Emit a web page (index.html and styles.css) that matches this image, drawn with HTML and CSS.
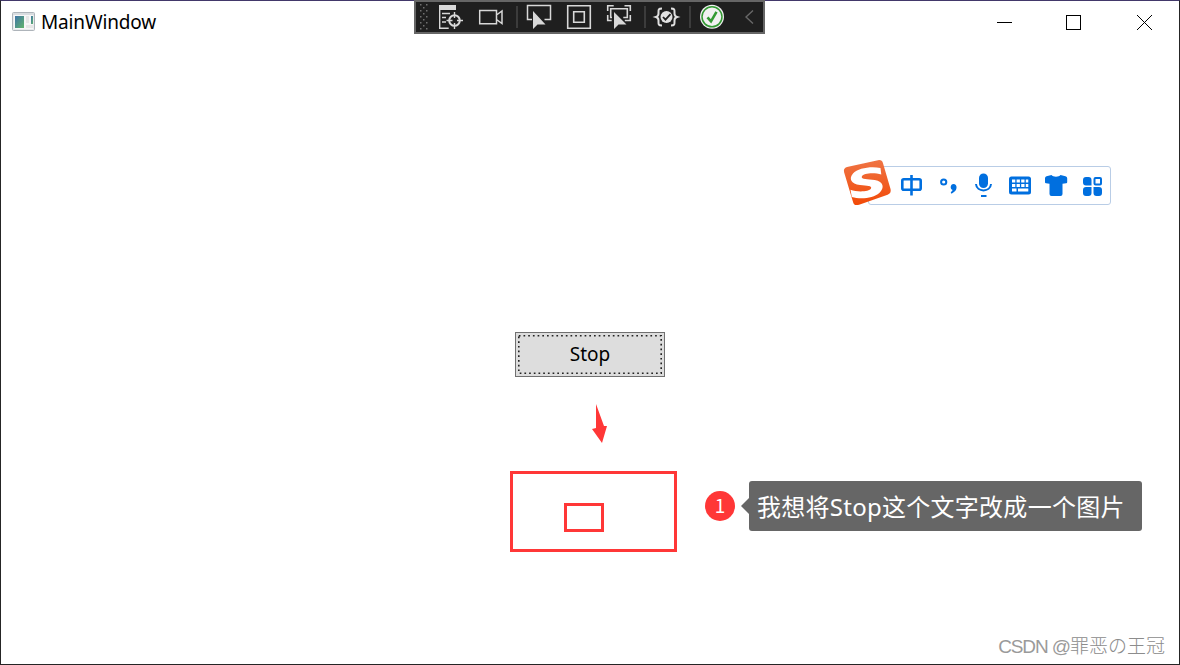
FILE: index.html
```
<!DOCTYPE html>
<html lang="zh-CN">
<head>
<meta charset="utf-8">
<title>MainWindow</title>
<link rel="stylesheet" href="styles.css">
</head>
<body>
<div class="window">
  <header class="titlebar">
    <svg class="app-icon" width="24" height="20" viewBox="12 12 24 20">
      <defs><linearGradient id="pane" x1="0" y1="0" x2="1" y2="1"><stop offset="0" stop-color="#3f74a8"/><stop offset="1" stop-color="#62b56b"/></linearGradient></defs>
      <rect x="12.500" y="12.500" width="22" height="18" rx="1" fill="#e9ebed" stroke="#aeb4ba"/>
      <path d="M13 14h21" stroke="#c9ced3"/>
      <rect x="14" y="15" width="19" height="14" fill="#f7f7f7"/>
      <rect x="15" y="16" width="9" height="12" fill="url(#pane)"/>
      <path d="M26 16h3v7h-3zM26 25h7v3h-7z" fill="#e6e6e6"/>
      <rect x="31" y="16" width="2" height="8" fill="url(#pane)"/>
    </svg>
    <h1 class="title">MainWindow</h1>
    <div class="captions">
      <svg width="70" height="43" viewBox="970 1 70 43"><path d="M997 22.500h15" stroke="#000"/></svg>
      <svg width="70" height="43" viewBox="1040 1 70 43"><rect x="1066.500" y="15.500" width="14" height="14" fill="none" stroke="#000"/></svg>
      <svg width="69" height="43" viewBox="1110 1 69 43"><path d="M1137 15l15 15M1152 15l-15 15" stroke="#000"/></svg>
    </div>
  </header>
  <main class="client">
    <button class="stop">
      <svg class="focus" width="146" height="41" viewBox="0 0 146 41"><rect x="1.800" y="1.800" width="142.400" height="37.400" fill="none" stroke="#222" stroke-width="1.600" stroke-dasharray="1.700 3"/></svg>
      <span class="label">Stop</span>
    </button>
  </main>
</div>

<div class="debugbar">
  <svg width="18" height="30" viewBox="416 2 18 30"><defs><pattern id="grip" x="420" y="4" width="6" height="6" patternUnits="userSpaceOnUse"><path d="M0 0h1.500v1.500h-1.500zM3 3h1.500v1.500h-1.500z" fill="#707070"/></pattern></defs><rect x="420" y="4" width="8" height="26" fill="url(#grip)"/></svg>
  <svg width="36" height="30" viewBox="434 2 36 30" fill="none" stroke="#d8d8d8" stroke-width="1.400">
    <path d="M439 5h17v5h-17z" fill="#d8d8d8" stroke="none"/><path d="M439.700 9v19.300h9M442 13.500h8M442 17.500h4M442 22h4M446.500 20.500h6M457 20.500h6M454.500 12v6M454.500 23v6"/><circle cx="454.500" cy="20.500" r="5.300" stroke-width="2"/>
  </svg>
  <svg width="46" height="30" viewBox="470 2 46 30" fill="none" stroke="#d8d8d8" stroke-width="1.500"><path d="M479.700 10.500h16.800v13.300h-16.800zM496.500 15l5.500-4v12.500l-5.500-4"/></svg>
  <i class="sep"></i>
  <svg width="42" height="30" viewBox="518 2 42 30"><path d="M532 19.500h-4.500v-14h23v14h-6" fill="none" stroke="#d8d8d8" stroke-width="1.500"/><path d="M533 11v18l4.500-4.500h8z" fill="#d8d8d8"/></svg>
  <svg width="40" height="30" viewBox="560 2 40 30" fill="none" stroke="#d8d8d8" stroke-width="1.600"><path d="M567.700 5.700h22.600v22.600h-22.600zM573.700 11.700h10.600v10.600h-10.600z"/></svg>
  <svg width="44" height="30" viewBox="600 2 44 30"><path d="M607.700 11v-5.300h6M624.500 5.700h5.800v5.300M607.700 15v5.500h4M630.300 15v5.500h-5.500M612 17.500h-1.300v-8.800h16.600v8.800h-4" fill="none" stroke="#d8d8d8" stroke-width="1.600"/><path d="M614 12v17l4.500-4.500h8z" fill="#d8d8d8"/></svg>
  <i class="sep"></i>
  <svg width="43" height="30" viewBox="646 2 43 30" fill="none" stroke="#e0e0e0" stroke-width="2"><path d="M662 8.500c-4 0-3.500 1-3.500 5 0 2-.8 3-2.500 3.500 1.700.5 2.500 1.500 2.500 3.500 0 4-.5 5 3.500 5M671 8.500c4 0 3.500 1 3.500 5 0 2 .8 3 2.500 3.500-1.700.5-2.500 1.500-2.500 3.500 0 4 .5 5-3.500 5"/><circle cx="666.500" cy="17" r="6" fill="#e0e0e0" stroke="none"/><path d="M663 17l2.500 2.700 5-5.500" stroke="#1f1f1f" stroke-width="1.800"/></svg>
  <i class="sep"></i>
  <svg width="45" height="30" viewBox="691 2 45 30" fill="none"><circle cx="712" cy="16.800" r="12" fill="#f1f1f1"/><circle cx="712" cy="16.800" r="10" stroke="#339933" stroke-width="1.500"/><path d="M707.500 17.300l3.500 4 5.500-9.500" stroke="#339933" stroke-width="2.600"/></svg>
  <svg width="27" height="30" viewBox="736 2 27 30"><path d="M753 10.500l-7 6.500 7 6.500" fill="none" stroke="#686868" stroke-width="1.400"/></svg>
</div>

<div class="ime">
  <svg class="ime-logo" width="50" height="50" viewBox="842 158 50 50">
    <defs><linearGradient id="orange" x1="0" y1="0" x2="0" y2="1"><stop offset="0" stop-color="#ef7444"/><stop offset="1" stop-color="#f24a08"/></linearGradient></defs>
    <path d="M847 167l31-6.800q4-.7 5 3l7.600 26q.8 4-3 5.500l-28.500 10q-5 1.500-6-2.500l-9-30q-1-4 2.900-5.200z" fill="url(#orange)"/>
    <path d="M880.500 168l.8 6.500c-7-2-18-1.500-19.500 2-1 3 6 2.500 13 3.500 9 1.500 10 8 4.500 13-6 5.500-19 6.500-27.500 4l-1.300-7.200c7 2.500 18.500 2 20.500-1.300 1.500-2.800-4-2.700-11-3.500-9-1-11.500-6.500-7-11.500 5-5.500 18-7.500 27.500-5.500z" fill="#fff"/>
  </svg>
  <svg width="38" height="36" viewBox="892 168 38 36" fill="none" stroke="#006fdf" stroke-width="2.600"><rect x="902.300" y="179.300" width="18.400" height="10.400" rx="1.500"/><path d="M911.500 175v20.500"/></svg>
  <svg width="36" height="36" viewBox="930 168 36 36"><circle cx="943.700" cy="182" r="2.600" fill="none" stroke="#006fdf" stroke-width="2"/><path d="M953.500 184c4 0 4 6 .5 8l-2.500 1.700-.8-1.200 2-2.500c-3-1-2.500-6 .8-6z" fill="#006fdf"/></svg>
  <svg width="36" height="36" viewBox="966 168 36 36" fill="none" stroke="#006fdf" stroke-width="2"><rect x="979" y="173.500" width="9" height="14.500" rx="4.500" fill="#006fdf" stroke="none"/><path d="M976 184c.5 8.500 14.500 8.500 15 0M981 196h5.500"/></svg>
  <svg width="36" height="36" viewBox="1002 168 36 36"><rect x="1009" y="176.500" width="22" height="18" rx="2.500" fill="#006fdf"/><path d="M1012 179.500h3.300v3h-3.300zM1016.600 179.500h3.300v3h-3.300zM1021.200 179.500h3.300v3h-3.300zM1025.800 179.500h2.500v3h-2.500zM1012 184h3.300v3h-3.300zM1016.600 184h3.300v3h-3.300zM1021.200 184h3.300v3h-3.300zM1025.800 184h2.500v3h-2.500zM1012 188.500h4.500v3h-4.500zM1018 188.500h10.300v3h-10.300z" fill="#fff"/></svg>
  <svg width="36" height="36" viewBox="1038 168 36 36"><path d="M1051.500 175c1.500 2.200 7.500 2.200 9 0l5 1.200q1.700.5 1.700 2v4q0 1-1 1l-3.700.5v10.300q0 2-2 2h-9q-2 0-2-2v-10.300l-3.500-.5q-1 0-1-1v-4q0-1.500 1.500-2z" fill="#006fdf"/></svg>
  <svg width="36" height="36" viewBox="1074 168 36 36" fill="#006fdf"><path d="M1086 177h2.500q3 0 3 3v5.500h-5.500q-3 0-3-3v-2.500q0-3 3-3zM1083 190q0-3 3-3h5.500v6q0 3-3 3h-2.500q-3 0-3-3zM1093.500 187h5.500q3 0 3 3v3q0 3-3 3h-2.500q-3 0-3-3z"/><rect x="1094.500" y="178" width="6.500" height="6.500" rx="1" fill="none" stroke="#006fdf" stroke-width="2"/></svg>
</div>

<svg class="arrow" width="16" height="40" viewBox="592 404 16 40"><path d="M596 404l8 22h3l-5 17-10-14 4-1z" fill="#ff3737"/></svg>
<div class="mark"></div>
<div class="mark-inner"></div>
<div class="note">
  <span class="badge">1</span>
  <i class="pointer"></i>
  <p class="bubble">我想将Stop这个文字改成一个图片</p>
</div>
<div class="watermark"><span class="latin">CSDN @</span>罪恶の王冠</div>
</body>
</html>
```
FILE: styles.css
```
* { box-sizing: border-box; }
body {
  margin: 0;
  width: 1180px;
  height: 665px;
  overflow: hidden;
  background: #fff;
  font-family: "Noto Sans", "Noto Sans CJK SC", sans-serif;
  position: relative;
}
svg { display: block; flex: none; }
.window {
  height: 665px;
  display: flex;
  flex-direction: column;
  border: 1px solid #252525;
  border-top-color: #42386a;
}
.titlebar { display: flex; height: 43px; }
.app-icon { margin: 11px 0 0 11px; }
.title {
  margin: 7px 0 0 5px;
  font-size: 19px;
  line-height: 28px;
  font-weight: 400;
  letter-spacing: -0.15px;
  color: #000;
}
.captions { display: flex; margin-left: auto; }
.client { flex: 1; display: flex; align-items: center; justify-content: center; }
.stop {
  display: grid;
  width: 150px;
  height: 45px;
  padding: 1px;
  border: 1px solid #707070;
  background: #ddd;
  font: 19px/41px "Noto Sans", sans-serif;
  color: #000;
}
.focus, .label { grid-area: 1 / 1; }

.debugbar {
  position: absolute;
  left: 414px;
  top: 0;
  width: 351px;
  height: 34px;
  display: flex;
  align-items: center;
  border: 2px solid #666;
  background: #1f1f1f;
}
.sep { width: 2px; height: 22px; background: #3c3c3c; }

.ime {
  position: absolute;
  left: 868px;
  top: 166px;
  width: 243px;
  height: 39px;
  padding-left: 23px;
  display: flex;
  align-items: center;
  border: 1.500px solid #b9cde6;
  border-radius: 3px;
  background: #fff;
}
.ime-logo { position: absolute; left: -27px; top: -9px; }

.arrow { position: absolute; left: 592px; top: 404px; }
.mark, .mark-inner { position: absolute; border: 3px solid #ff3737; }
.mark { left: 510px; top: 471px; width: 167px; height: 81px; }
.mark-inner { left: 564px; top: 503px; width: 40px; height: 29px; }
.note {
  position: absolute;
  left: 705px;
  top: 481px;
  display: flex;
  align-items: center;
}
.badge {
  width: 30px;
  height: 30px;
  border-radius: 50%;
  background: #ff3737;
  color: #fff;
  font: 19px/28px "Noto Sans CJK SC", sans-serif;
  text-align: center;
}
.pointer {
  margin-left: 6px;
  border: 8px solid transparent;
  border-left: 0;
  border-right-color: #666;
}
.bubble {
  margin: 0;
  width: 393px;
  height: 50px;
  padding-left: 8px;
  border-radius: 3px;
  background: #666;
  color: #fff;
  font-size: 24px;
  line-height: 51px;
  letter-spacing: 0.27px;
  white-space: nowrap;
}
.watermark {
  position: absolute;
  right: 15px;
  bottom: 4px;
  font: 300 19px/28px "Liberation Sans", "Noto Sans CJK SC", sans-serif;
  color: #8c8c8c;
  white-space: nowrap;
}
.latin { letter-spacing: -1.1px; color: #9a9a9a; }
```
